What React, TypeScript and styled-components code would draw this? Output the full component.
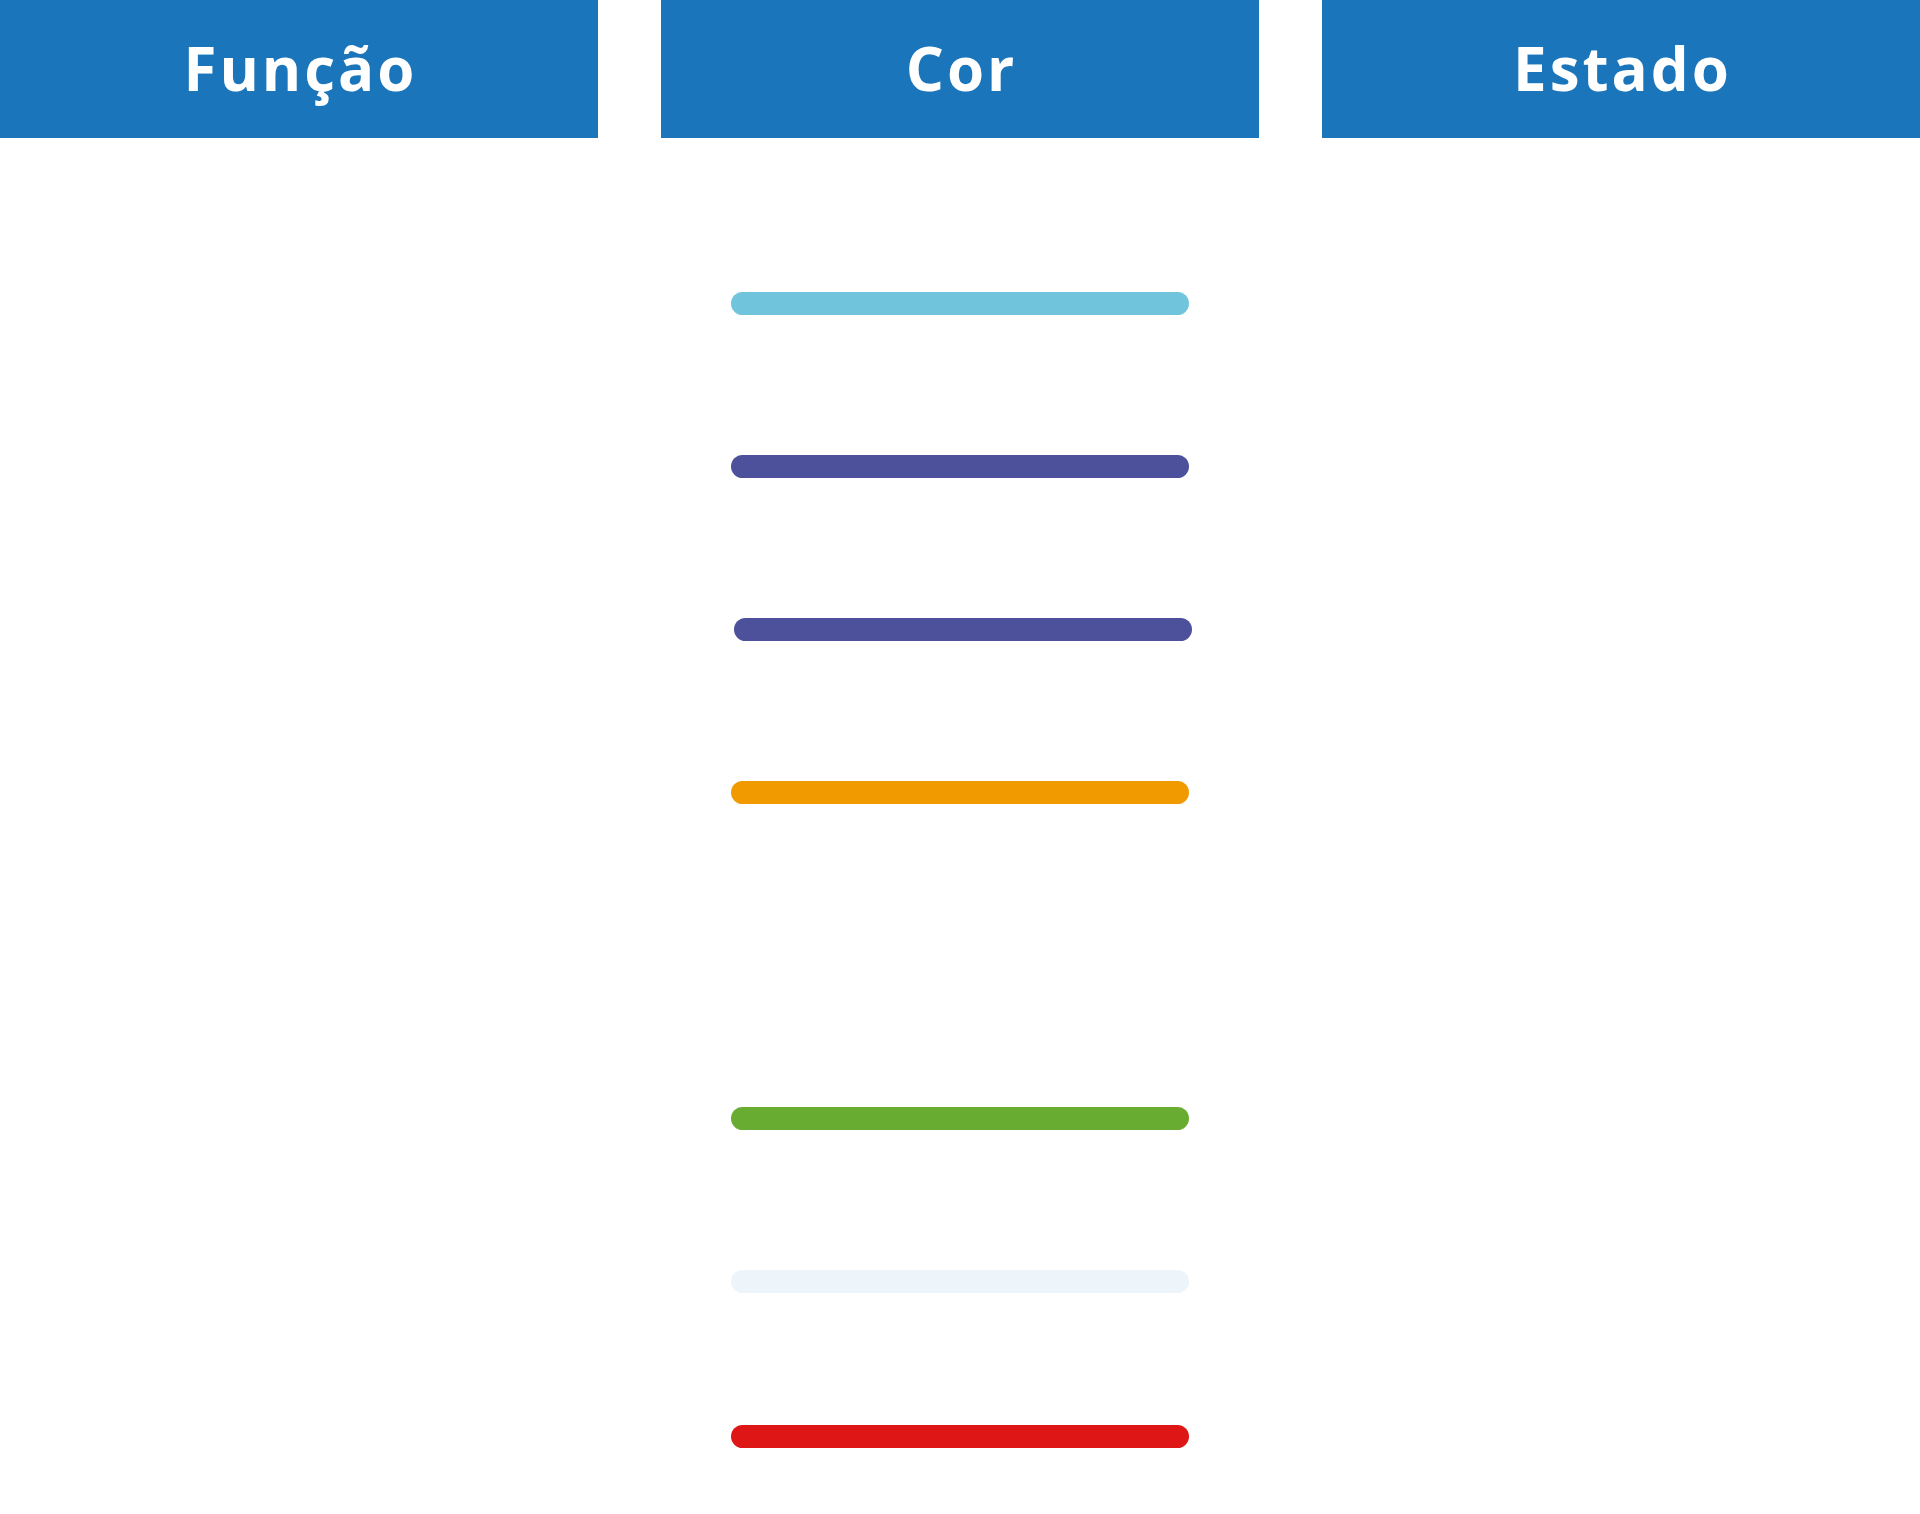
import React from "react";
import styled, { createGlobalStyle } from "styled-components";

const GlobalStyle = createGlobalStyle`
  html, body {
    margin: 0;
    padding: 0;
    background: #ffffff;
  }
  body {
    font-family: "Open Sans", "Liberation Sans", sans-serif;
  }
`;

const Page = styled.div`
  width: 1920px;
  height: 1514px;
  display: grid;
  grid-template-columns: 598px 598px 598px;
  column-gap: 63px;
  grid-template-rows: 138px 1fr;
  background: #ffffff;
`;

const HeaderCell = styled.div`
  background: #1a75ba;
  display: flex;
  align-items: center;
  justify-content: center;
  color: #ffffff;
  font-family: "Open Sans", "Liberation Sans", sans-serif;
  font-weight: 700;
  font-size: 60px;
  letter-spacing: 3px;
  text-indent: 3px;
  line-height: 1;
  padding-bottom: 2px;
`;

const Column = styled.div`
  display: flex;
  flex-direction: column;
  padding-top: 154px;
  gap: 140px;
`;

const Swatch = styled.div<{ $color: string; $shift?: number; $lift?: number }>`
  width: 458px;
  height: 23px;
  border-radius: 12px;
  background: ${(p) => p.$color};
  margin-left: ${(p) => 70 + (p.$shift ?? 0)}px;
  margin-top: ${(p) => -(p.$lift ?? 0)}px;
  flex: none;
`;

const rows: { color: string; shift?: number; lift?: number }[] = [
  { color: "#70c5dc" },
  { color: "#4d509b" },
  { color: "#4d509b", shift: 3 },
  { color: "#f09a00" },
  { color: "transparent" },
  { color: "#68ac32" },
  { color: "#edf5fb" },
  { color: "#df1616", lift: 8 },
];

export default function App() {
  return (
    <>
      <GlobalStyle />
      <Page>
        <HeaderCell>Função</HeaderCell>
        <HeaderCell>Cor</HeaderCell>
        <HeaderCell>Estado</HeaderCell>
        <Column />
        <Column>
          {rows.map((r, i) => (
            <Swatch key={i} $color={r.color} $shift={r.shift} $lift={r.lift} />
          ))}
        </Column>
        <Column />
      </Page>
    </>
  );
}
